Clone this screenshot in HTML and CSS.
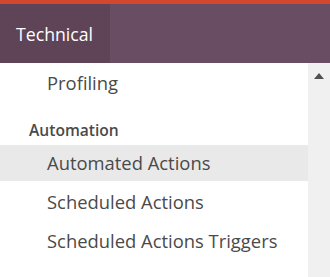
FILE: index.html
```html
<!DOCTYPE html>
<html lang="en">
<head>
  <meta charset="UTF-8">
  <meta name="viewport" content="width=device-width, initial-scale=1.0">
  <title>Technical</title>
  <link rel="stylesheet" href="styles.css">
</head>
<body>
  <header class="navbar">
    <div class="nav-tab">Technical</div>
  </header>

  <div class="panel">
    <!-- Menu deroulant -->
    <ul class="menu">
      <li class="menu-item">Profiling</li>
      <li class="menu-header">Automation</li>
      <li class="menu-item active">Automated Actions</li>
      <li class="menu-item">Scheduled Actions</li>
      <li class="menu-item">Scheduled Actions Triggers</li>
    </ul>

    <!-- Barre de defilement -->
    <div class="scrollbar">
      <span class="scroll-up"></span>
    </div>
  </div>
</body>
</html>
```

FILE: styles.css
```css
body {
  margin: 0;
  padding: 0;
  font-family: 'Open Sans', sans-serif;
  background-color: #ffffff;
  color: #4a4a4a;
  overflow: hidden;
}
.navbar {
  display: flex;
  height: 59px;
  border-top: 4px solid #d4472f;
  background-color: #694d63;
}
.nav-tab {
  display: flex;
  align-items: center;
  width: 110px;
  box-sizing: border-box;
  padding-left: 16px;
  background-color: #5f4458;
  color: white;
  font-size: 17.7px;
}
.panel {
  display: flex;
  height: 214px;
}
.menu {
  flex: 1;
  list-style: none;
  margin: 0;
  padding: 2px 0 0 0;
}
.menu-item {
  height: 36px;
  line-height: 36px;
  margin-bottom: 3px;
  padding-left: 47px;
  font-size: 18.4px;
  color: #4a4a4a;
}
.menu-item.active {
  background-color: #e9e9e9;
}
.menu-header {
  padding: 14px 0 0 29px;
  height: 24px;
  line-height: 24px;
  margin-bottom: 3px;
  font-size: 15.6px;
  font-weight: 600;
  color: #4a4a4a;
}
.scrollbar {
  width: 22px;
  background-color: #f0f0f0;
  display: flex;
  justify-content: center;
  padding-top: 10px;
  box-sizing: border-box;
}
.scroll-up {
  width: 0;
  height: 0;
  border-left: 5px solid transparent;
  border-right: 5px solid transparent;
  border-bottom: 6px solid #505050;
}
```
